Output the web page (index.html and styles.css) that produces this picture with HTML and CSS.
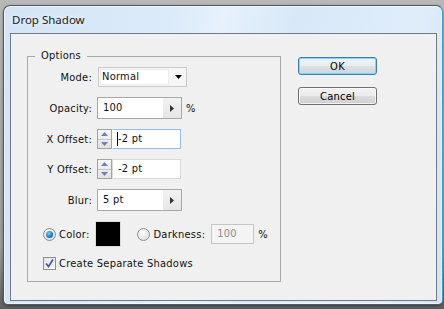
FILE: index.html
```html
<!DOCTYPE html>
<html lang="en">
<head>
    <meta charset="UTF-8">
    <meta name="viewport" content="width=device-width, initial-scale=1.0">
    <title>Drop Shadow</title>
    <link rel="stylesheet" href="styles.css">
</head>
<body>
    <!-- Window -->
    <div class="window">
        <div class="titlebar">Drop Shadow</div>

        <div class="client">
            <!-- Options group -->
            <fieldset class="group">
                <legend>Options</legend>

                <div class="row row-20">
                    <span class="label">Mode:</span>
                    <div class="select">
                        <div class="select-text">Normal</div>
                        <div class="select-arrow">
                            <svg width="7" height="4" viewBox="0 0 7 4"><polygon points="0,0 7,0 3.5,4" fill="#000"/></svg>
                        </div>
                    </div>
                </div>

                <div class="row row-22">
                    <span class="label">Opacity:</span>
                    <div class="num">
                        <div class="num-text">100</div>
                        <div class="num-btn">
                            <svg width="4" height="7" viewBox="0 0 4 7"><polygon points="0,0 4,3.5 0,7" fill="#333"/></svg>
                        </div>
                    </div>
                    <span class="unit">%</span>
                </div>

                <div class="row row-20">
                    <span class="label">X Offset:</span>
                    <div class="spin">
                        <div class="spin-half">
                            <svg width="7" height="4" viewBox="0 0 7 4"><polygon points="0,4 7,4 3.5,0" fill="#6f80b8"/></svg>
                        </div>
                        <div class="spin-half">
                            <svg width="7" height="4" viewBox="0 0 7 4"><polygon points="0,0 7,0 3.5,4" fill="#6f80b8"/></svg>
                        </div>
                    </div>
                    <div class="text-field focused"><span class="caret"></span>-2 pt</div>
                </div>

                <div class="row row-20">
                    <span class="label">Y Offset:</span>
                    <div class="spin">
                        <div class="spin-half">
                            <svg width="7" height="4" viewBox="0 0 7 4"><polygon points="0,4 7,4 3.5,0" fill="#6f80b8"/></svg>
                        </div>
                        <div class="spin-half">
                            <svg width="7" height="4" viewBox="0 0 7 4"><polygon points="0,0 7,0 3.5,4" fill="#6f80b8"/></svg>
                        </div>
                    </div>
                    <div class="text-field">-2 pt</div>
                </div>

                <div class="row row-22">
                    <span class="label">Blur:</span>
                    <div class="num">
                        <div class="num-text">5 pt</div>
                        <div class="num-btn">
                            <svg width="4" height="7" viewBox="0 0 4 7"><polygon points="0,0 4,3.5 0,7" fill="#333"/></svg>
                        </div>
                    </div>
                </div>

                <div class="row row-26 indent">
                    <span class="radio checked"></span>
                    <span class="opt-label">Color:</span>
                    <span class="swatch"></span>
                    <span class="radio"></span>
                    <span class="opt-label">Darkness:</span>
                    <div class="text-field disabled">100</div>
                    <span class="unit">%</span>
                </div>

                <div class="row row-13 indent">
                    <span class="checkbox">
                        <svg width="9" height="9" viewBox="0 0 9 9"><path d="M1 4.5 L3.5 7.5 L8 0.5" fill="none" stroke="#4757a8" stroke-width="1.7"/></svg>
                    </span>
                    <span class="opt-label">Create Separate Shadows</span>
                </div>
            </fieldset>

            <!-- Buttons -->
            <div class="buttons">
                <button class="btn default">OK</button>
                <button class="btn">Cancel</button>
            </div>
        </div>
    </div>
</body>
</html>
```

FILE: styles.css
```css
body {
    margin: 0;
    width: 444px;
    height: 309px;
    box-sizing: border-box;
    padding: 5px 1px 4px 3px;
    background: linear-gradient(#b8b8b8, #9c9c9c 80%, #5e5e5e);
    font-family: "DejaVu Sans Condensed", "Liberation Sans", sans-serif;
    font-size: 11px;
    letter-spacing: 0.25px;
    color: #111;
}

.window {
    height: 100%;
    box-sizing: border-box;
    display: flex;
    flex-direction: column;
    border: 1px solid #4d5a67;
    border-right-color: #2e9fd0;
    border-radius: 7px 7px 5px 5px;
    padding: 0 5px 3px 6px;
    background: linear-gradient(100deg, #d3e4f6 0%, #dcebfa 35%, #e6f1fc 45%, #d8e8f8 60%, #dfedfb 85%, #d2e3f5 100%);
    box-shadow: inset 0 0 0 1px rgba(255, 255, 255, 0.55), 0 1px 3px rgba(0, 0, 0, 0.4);
}

.titlebar {
    height: 27px;
    line-height: 27px;
    padding-left: 2px;
    font-family: "Noto Sans", "Open Sans", sans-serif;
    font-size: 11.5px;
    letter-spacing: 0;
    color: #1b1b1b;
    text-shadow: 0 0 6px #fff;
}

.client {
    flex: 1;
    display: flex;
    align-items: flex-start;
    border: 1px solid #717b85;
    background-color: #f0f0f0;
    padding-left: 16px;
}

/* Group box */
.group {
    width: 254px;
    box-sizing: border-box;
    margin: 15px 0 0 0;
    padding: 4px 0 11px 0;
    border: 1px solid #a9a9a9;
    display: flex;
    flex-direction: column;
    gap: 10px;
}

.group legend {
    margin-left: 7px;
    padding: 0 6px;
    line-height: 14px;
}

.row {
    display: flex;
    align-items: center;
}

.row-20 { height: 20px; }
.row-22 { height: 22px; }
.row-26 { height: 26px; }
.row-13 { height: 13px; }

.indent {
    padding-left: 15px;
}

.label {
    width: 64px;
    text-align: right;
    margin-right: 5px;
}

.unit {
    margin-left: 4px;
}

/* Dropdown */
.select {
    width: 89px;
    height: 20px;
    box-sizing: border-box;
    margin-left: 1px;
    display: flex;
    border: 1px solid #cacaca;
    background-color: #f6f6f6;
}

.select-text {
    width: 66px;
    margin: 1px;
    padding-left: 1px;
    background-color: #fff;
    border: 1px solid #ececec;
    line-height: 14px;
}

.select-arrow {
    flex: 1;
    display: flex;
    justify-content: center;
    align-items: center;
}

/* Number field with arrow button */
.num {
    width: 85px;
    height: 22px;
    box-sizing: border-box;
    display: flex;
    border: 1px solid #a8a8a8;
}

.num-text {
    flex: 1;
    padding-left: 5px;
    background-color: #fff;
    line-height: 20px;
}

.num-btn {
    width: 18px;
    display: flex;
    justify-content: center;
    align-items: center;
    background: linear-gradient(#f2f2f2, #e6e6e6);
}

/* Spinner */
.spin {
    width: 15px;
    height: 20px;
    box-sizing: border-box;
    display: flex;
    flex-direction: column;
    border: 1px solid #a3a3a3;
    background: linear-gradient(#f7f7f7, #e3e3e3);
}

.spin-half {
    flex: 1;
    display: flex;
    justify-content: center;
    align-items: center;
}

.spin-half + .spin-half {
    border-top: 1px solid #c4c4c4;
}

.text-field {
    width: 69px;
    height: 20px;
    box-sizing: border-box;
    padding-left: 5px;
    border: 1px solid #dadada;
    background-color: #fff;
    line-height: 18px;
    display: flex;
    align-items: center;
}

.text-field.focused {
    border-color: #8fbde9;
    border-left-color: #fff;
}

.caret {
    width: 1px;
    height: 14px;
    background-color: #000;
    margin-left: -1px;
}

.text-field.disabled {
    width: 43px;
    border-color: #c6c6c6;
    background-color: #f4f4f4;
    color: #8b8b8b;
}

/* Radio and checkbox */
.radio {
    width: 13px;
    height: 13px;
    box-sizing: border-box;
    border-radius: 50%;
    border: 1px solid #8e8f8f;
    background: radial-gradient(circle at 40% 35%, #fdfdfd, #d6d6d6);
    margin-right: 3px;
    display: flex;
    justify-content: center;
    align-items: center;
}

.radio.checked::after {
    content: "";
    width: 7px;
    height: 7px;
    border-radius: 50%;
    background: radial-gradient(circle at 40% 35%, #7fd0f5, #1777c4 60%, #0b4f8e);
}

.opt-label + .swatch {
    margin-left: 6px;
}

.swatch {
    width: 26px;
    height: 26px;
    box-sizing: border-box;
    background-color: #000;
    border: 1px solid #dcdcdc;
    margin-right: 16px;
}

.opt-label + .text-field {
    margin-left: 6px;
}

.checkbox {
    width: 13px;
    height: 13px;
    box-sizing: border-box;
    border: 1px solid #8e8f8f;
    background: linear-gradient(135deg, #e4e4e4, #fafafa);
    margin-right: 3px;
    display: flex;
    justify-content: center;
    align-items: center;
}

/* Buttons */
.buttons {
    display: flex;
    flex-direction: column;
    gap: 12px;
    margin: 23px 0 0 17px;
}

.btn {
    width: 79px;
    height: 18px;
    padding: 0;
    font-family: "DejaVu Sans Condensed", "Liberation Sans", sans-serif;
    font-size: 11px;
    letter-spacing: 0.25px;
    color: #000;
    border: 1px solid #707070;
    border-radius: 3px;
    background: linear-gradient(#f2f2f2 0%, #ebebeb 50%, #dddddd 51%, #cfcfcf 100%);
    box-shadow: inset 0 0 0 1px rgba(255, 255, 255, 0.7);
}

.btn.default {
    border-color: #3c7fb1;
    box-shadow: inset 0 0 0 1px #7fd6f7;
    background: linear-gradient(#f0f4f7 0%, #e8edf0 50%, #dbe1e5 51%, #cfd6db 100%);
}
```
